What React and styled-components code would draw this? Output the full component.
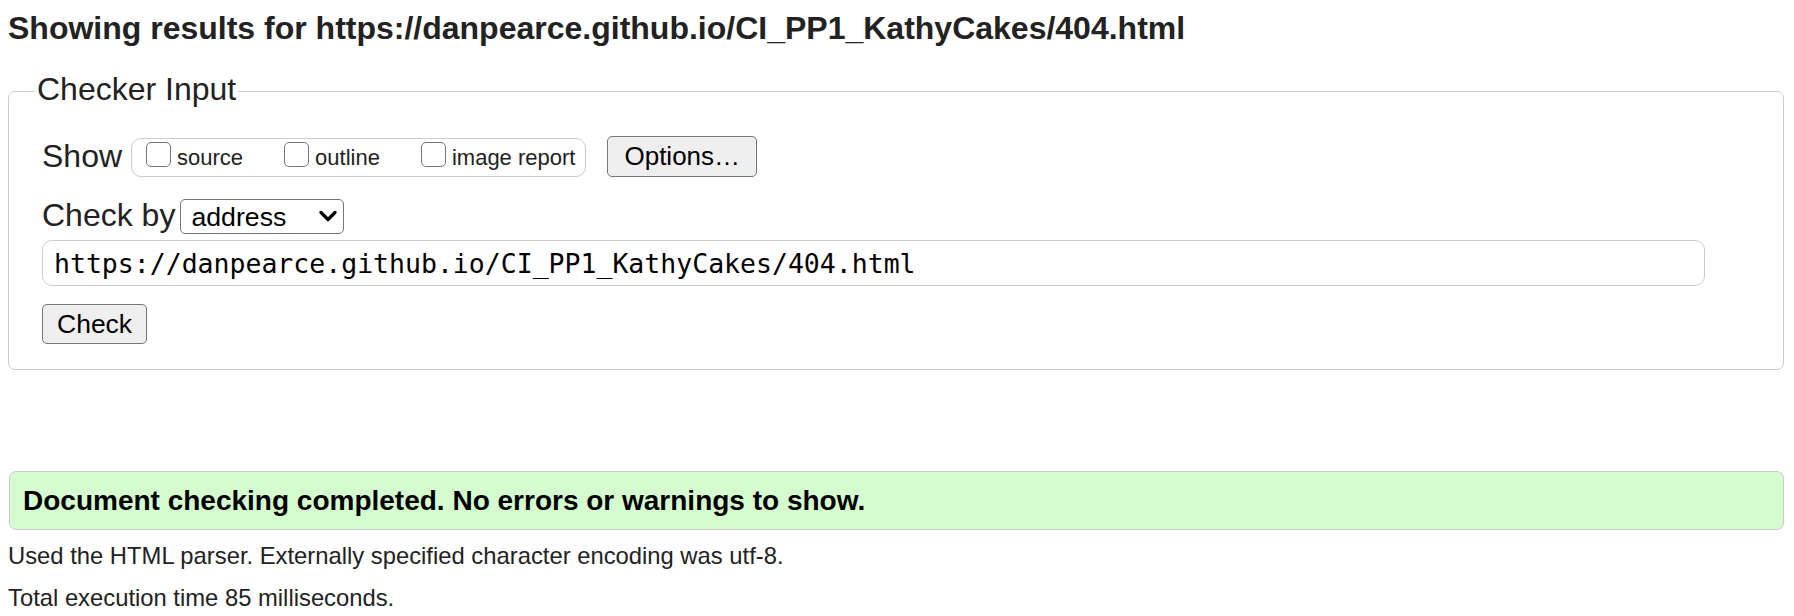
import React from "react";
import styled, { createGlobalStyle } from "styled-components";

const Global = createGlobalStyle`
  html, body { margin: 0; padding: 0; background: #fff; }
  body { font-family: "Liberation Sans", Arial, sans-serif; color: #222; }
  * { box-sizing: border-box; }
`;

const Page = styled.div`
  padding: 10px 10px 0 8px;
`;

const Heading = styled.h2`
  margin: 0;
  font-size: 32px;
  line-height: 36px;
  font-weight: 700;
  color: #222;
`;

const Fieldset = styled.fieldset`
  margin: 25px 0 0;
  border: 1px solid #ccc;
  border-radius: 7px;
  padding: 24px 0 25px 26px;
  min-width: 0;
`;

const Legend = styled.legend`
  font-size: 32px;
  line-height: 36px;
  padding: 0 2px 5px;
  color: #222;
`;

const Rows = styled.div`
  margin-left: 7px;
  display: flex;
  flex-direction: column;
`;

const Row = styled.div`
  display: flex;
  align-items: flex-end;
  margin-top: ${(p) => p.$mt || 0}px;
`;

const Label = styled.span`
  font-size: 32px;
  line-height: 36px;
  margin-bottom: ${(p) => p.$mb || 0}px;
  color: #222;
`;

const OptionGroup = styled.div`
  display: flex;
  align-items: flex-start;
  height: 39px;
  margin-left: 9px;
  padding: 3px 10px 0 14px;
  border: 1px solid #ccc;
  border-radius: 10px;
  gap: 41px;
`;

const Option = styled.label`
  display: flex;
  align-items: flex-start;
`;

const Box = styled.input.attrs({ type: "checkbox" })`
  appearance: none;
  margin: 0;
  width: 25px;
  height: 25px;
  border: 1.5px solid #767676;
  border-radius: 5px;
  background: #fff;
`;

const OptionText = styled.span`
  font-size: 22px;
  line-height: 26px;
  margin: 3px 0 0 6px;
  color: #222;
`;

const Button = styled.button`
  margin: 0 0 0 ${(p) => p.$ml || 0}px;
  height: ${(p) => p.$h || 40}px;
  padding: 0 ${(p) => p.$px || 14}px;
  font-family: "Liberation Sans", Arial, sans-serif;
  font-size: ${(p) => p.$fs || 26.5}px;
  color: #000;
  background: #efefef;
  border: 1.5px solid #767676;
  border-radius: 5px;
`;

const SelectWrap = styled.div`
  position: relative;
  margin-left: 5px;
  width: 164px;
  height: 35px;
`;

const Select = styled.select`
  appearance: none;
  width: 100%;
  height: 100%;
  margin: 0;
  padding: 0 0 0 10px;
  font-family: "Liberation Sans", Arial, sans-serif;
  font-size: 26.7px;
  color: #000;
  background: #fff;
  border: 1.5px solid #767676;
  border-radius: 5px;
`;

const Chevron = styled.svg`
  position: absolute;
  right: 7px;
  top: 11px;
  width: 18px;
  height: 12px;
  pointer-events: none;
`;

const UrlInput = styled.input`
  margin: 0;
  width: 1663px;
  height: 46px;
  padding: 0 11px;
  font-family: "DejaVu Sans Mono", monospace;
  font-size: 26.5px;
  color: #000;
  border: 1.5px solid #ccc;
  border-radius: 10px;
  background: #fff;
`;

const Notice = styled.div`
  margin-top: 101px;
  margin-left: 1px;
  height: 59px;
  display: flex;
  align-items: center;
  padding-left: 13px;
  background: #d5fcce;
  border: 1.5px solid #ccc;
  border-radius: 7px;
  font-size: 28px;
  font-weight: 700;
  color: #000;
`;

const Info = styled.div`
  display: flex;
  flex-direction: column;
  gap: 14px;
  margin-top: 12px;
`;

const Para = styled.p`
  margin: 0;
  font-size: 23.8px;
  line-height: 28px;
  color: #222;
`;

const url = "https://danpearce.github.io/CI_PP1_KathyCakes/404.html";

export default function App() {
  return (
    <Page>
      <Global />
      <Heading>Showing results for {url}</Heading>
      <Fieldset>
        <Legend>Checker Input</Legend>
        <Rows>
          <Row>
            <Label $mb={3}>Show</Label>
            <OptionGroup>
              <Option>
                <Box />
                <OptionText>source</OptionText>
              </Option>
              <Option>
                <Box />
                <OptionText>outline</OptionText>
              </Option>
              <Option>
                <Box />
                <OptionText>image report</OptionText>
              </Option>
            </OptionGroup>
            <Button $ml={21} $h={41} $px={16} $fs={26}>
              Options…
            </Button>
          </Row>
          <Row $mt={20}>
            <Label $mb={1}>Check by</Label>
            <SelectWrap>
              <Select defaultValue="address">
                <option value="address">address</option>
                <option value="file">file upload</option>
                <option value="text">text input</option>
              </Select>
              <Chevron viewBox="0 0 18 12">
                <path
                  d="M2 2.5 L9 9.5 L16 2.5"
                  fill="none"
                  stroke="#000"
                  strokeWidth="3.2"
                  strokeLinecap="round"
                  strokeLinejoin="round"
                />
              </Chevron>
            </SelectWrap>
          </Row>
          <Row $mt={6}>
            <UrlInput defaultValue={url} />
          </Row>
          <Row $mt={18}>
            <Button>Check</Button>
          </Row>
        </Rows>
      </Fieldset>
      <Notice>Document checking completed. No errors or warnings to show.</Notice>
      <Info>
        <Para>Used the HTML parser. Externally specified character encoding was utf-8.</Para>
        <Para>Total execution time 85 milliseconds.</Para>
      </Info>
    </Page>
  );
}
